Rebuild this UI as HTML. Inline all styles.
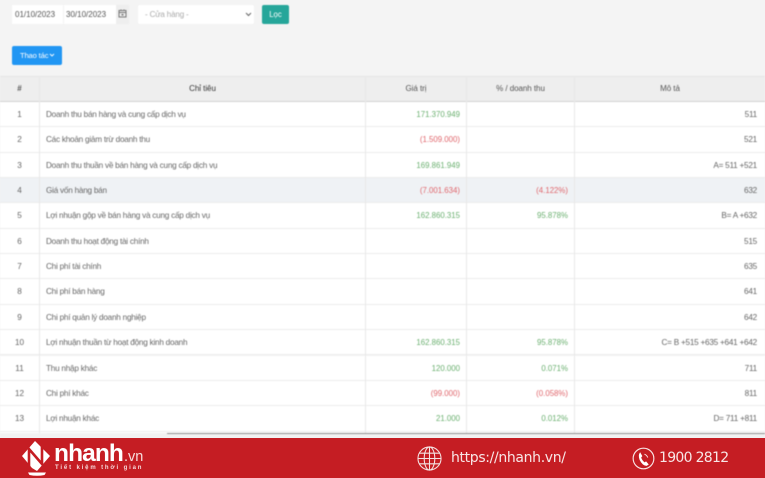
<!DOCTYPE html>
<html lang="vi"><head><meta charset="utf-8"><title>Báo cáo</title>
<style>
html,body{margin:0;padding:0}
body{width:765px;height:478px;overflow:hidden;position:relative;background:#f4f4f4;font-family:"Liberation Sans",sans-serif;font-size:8.2px;letter-spacing:-.24px;color:#666}
#blur{position:absolute;left:0;top:0;width:765px;height:438px;filter:blur(.4px);overflow:hidden}
.a{position:absolute;white-space:nowrap}
.box{position:absolute;background:#fff;box-sizing:border-box}
.row{position:absolute;left:0;width:765px;height:25.35px;background:#fff;border-bottom:1px solid #ececec;box-sizing:border-box}
.row.hl{background:#eff2f5}
.row span{position:absolute;top:0;line-height:25.2px;white-space:nowrap}
.n{left:0;width:39px;text-align:center;letter-spacing:0}
.t{left:46px}
.v{right:305px;font-size:7.85px;letter-spacing:0}
.p{right:197px;font-size:7.85px;letter-spacing:0}
.m{right:8px}
.g{color:#6bb070}
.r{color:#e0666c}
.vl{position:absolute;top:76px;height:358px;width:1px;background:#e8e8e8}
.h{top:77px;line-height:24px;text-align:center;color:#555;font-size:8px;letter-spacing:-.05px}
</style></head><body>
<div id="blur">
<div class="box" style="left:12px;top:5px;width:51px;height:19px"></div>
<div class="box" style="left:64px;top:5px;width:52px;height:19px"></div>
<div class="box" style="left:116px;top:5px;width:13px;height:19px;background:#eee"></div>
<div class="a" style="left:15px;top:5px;line-height:19px;font-size:8px;letter-spacing:0;color:#555">01/10/2023</div>
<div class="a" style="left:66px;top:5px;line-height:19px;font-size:8px;letter-spacing:0;color:#555">30/10/2023</div>
<svg class="a" style="left:118px;top:9px" width="9" height="9" viewBox="0 0 9 9" fill="none" stroke="#777" stroke-width="1"><rect x="1" y="1.5" width="7" height="6.5"/><path d="M1 3.5H8M3 .5V2M6 .5V2"/><rect x="3.5" y="5" width="2" height="1.5" fill="#777" stroke="none"/></svg>
<div class="box" style="left:138px;top:5px;width:116px;height:19px;border-radius:2px"></div>
<div class="a" style="left:145px;top:5px;line-height:19px;font-size:8px;letter-spacing:-.15px;color:#aaa">- Cửa hàng -</div>
<svg class="a" style="left:245px;top:12px" width="7" height="5" viewBox="0 0 7 5" fill="none" stroke="#666" stroke-width="1"><path d="M1 1L3.5 3.5L6 1"/></svg>
<div class="a" style="left:262px;top:5px;width:27px;height:19px;background:#26a69a;border-radius:2px;color:#fff;text-align:center;line-height:19px;font-size:7.8px;letter-spacing:0">Lọc</div>
<div class="a" style="left:12px;top:46px;width:50px;height:19px;background:#2196f3;border-radius:2px;color:#fff;line-height:19px;font-size:7.6px;letter-spacing:-.15px;text-indent:8px">Thao tác</div>
<svg class="a" style="left:49px;top:53px" width="6" height="5" viewBox="0 0 6 5" fill="none" stroke="#fff" stroke-width=".9"><path d="M1 1L3 3L5 1"/></svg>

<div class="a" style="left:0;top:76px;width:765px;height:26px;background:#eeeeee;border-top:1px solid #e6e6e6;border-bottom:1.5px solid #d4d4d4;box-sizing:border-box"></div>
<div class="a h" style="left:0;width:39px;font-weight:bold">#</div>
<div class="a h" style="left:40px;width:325px;color:#333">Chỉ tiêu</div>
<div class="a h" style="left:366px;width:100px">Giá trị</div>
<div class="a h" style="left:467px;width:107px">% / doanh thu</div>
<div class="a h" style="left:575px;width:190px">Mô tả</div>

<div class="row" style="top:102px"><span class="n">1</span><span class="t">Doanh thu bán hàng và cung cấp dịch vụ</span><span class="v g">171.370.949</span><span class="m">511</span></div>
<div class="row" style="top:127.35px"><span class="n">2</span><span class="t">Các khoản giảm trừ doanh thu</span><span class="v r">(1.509.000)</span><span class="m">521</span></div>
<div class="row" style="top:152.7px"><span class="n">3</span><span class="t">Doanh thu thuần về bán hàng và cung cấp dịch vụ</span><span class="v g">169.861.949</span><span class="m">A= 511 +521</span></div>
<div class="row hl" style="top:178.05px"><span class="n">4</span><span class="t">Giá vốn hàng bán</span><span class="v r">(7.001.634)</span><span class="p r">(4.122%)</span><span class="m">632</span></div>
<div class="row" style="top:203.4px"><span class="n">5</span><span class="t">Lợi nhuận gộp về bán hàng và cung cấp dịch vụ</span><span class="v g">162.860.315</span><span class="p g">95.878%</span><span class="m">B= A +632</span></div>
<div class="row" style="top:228.75px"><span class="n">6</span><span class="t">Doanh thu hoạt động tài chính</span><span class="m">515</span></div>
<div class="row" style="top:254.1px"><span class="n">7</span><span class="t">Chi phí tài chính</span><span class="m">635</span></div>
<div class="row" style="top:279.45px"><span class="n">8</span><span class="t">Chi phí bán hàng</span><span class="m">641</span></div>
<div class="row" style="top:304.8px"><span class="n">9</span><span class="t">Chi phí quản lý doanh nghiệp</span><span class="m">642</span></div>
<div class="row" style="top:330.15px"><span class="n">10</span><span class="t">Lợi nhuận thuần từ hoạt động kinh doanh</span><span class="v g">162.860.315</span><span class="p g">95.878%</span><span class="m">C= B +515 +635 +641 +642</span></div>
<div class="row" style="top:355.5px"><span class="n">11</span><span class="t">Thu nhập khác</span><span class="v g">120.000</span><span class="p g">0.071%</span><span class="m">711</span></div>
<div class="row" style="top:380.85px"><span class="n">12</span><span class="t">Chi phí khác</span><span class="v r">(99.000)</span><span class="p r">(0.058%)</span><span class="m">811</span></div>
<div class="row" style="top:406.2px"><span class="n">13</span><span class="t">Lợi nhuận khác</span><span class="v g">21.000</span><span class="p g">0.012%</span><span class="m">D= 711 +811</span></div>
<div class="row" style="top:431.5px;height:3px;border:0"></div>

<div class="vl" style="left:39px"></div><div class="vl" style="left:365px"></div><div class="vl" style="left:466px"></div><div class="vl" style="left:574px"></div>
<div class="a" style="left:0;top:433px;width:765px;height:5px;background:#f1f1f1"></div>
<div class="a" style="left:167px;top:433px;width:598px;height:1px;background:#8f8f8f"></div>
</div>

<div class="a" style="left:0;top:438px;width:765px;height:40px;background:#c51d23"></div>
<svg class="a" style="left:20px;top:438px;filter:blur(.3px)" width="32" height="40" viewBox="0 0 32 40">
<path d="M2 18L15 3L30 18L17 33L12 30Z" fill="#fff"/>
<path d="M9 28V11L22 26V8" fill="none" stroke="#c51d23" stroke-width="2.6"/>
<path d="M8 34.5H26L24.5 37Q17 38.5 9.5 37Z" fill="#fff"/>
</svg>
<div class="a" style="left:54px;top:440px;line-height:28px;font-size:24.5px;font-weight:bold;color:#fff;letter-spacing:-.9px;filter:blur(.2px)">nhanh</div>
<div class="a" style="left:124px;top:443px;line-height:28px;font-size:14.5px;color:#f6dcdc;letter-spacing:0;filter:blur(.2px)">.vn</div>
<div class="a" style="left:55px;top:464px;line-height:9px;font-size:6px;font-weight:bold;letter-spacing:1.85px;color:#f6d9da">Tiết kiệm thời gian</div>

<svg class="a" style="left:417px;top:446px" width="25" height="25" viewBox="0 0 26 26" fill="none" stroke="#f4e2e2" stroke-width="1.1"><circle cx="13" cy="13" r="12"/><ellipse cx="13" cy="13" rx="5.5" ry="12"/><path d="M13 1V25M2.5 7.5H23.5M1 13H25M2.5 18.5H23.5"/></svg>
<div class="a" style="left:451px;top:447px;line-height:22px;font-size:14px;color:#f8e6e6;font-family:'DejaVu Sans',sans-serif;letter-spacing:-.35px">https://nhanh.vn/</div>
<svg class="a" style="left:632px;top:447px" width="23" height="23" viewBox="0 0 24 24" fill="none" stroke="#f8e6e6"><circle cx="12" cy="12" r="10.8" stroke-width="1.2"/><path d="M8.5 5.5L10.8 9.5L9.6 11Q10.2 13.5 13 16L14.7 15L17.5 18.3L15.3 19.7Q11 19.5 8 13.5Q6 8.5 8.5 5.5Z" fill="#fff" stroke="none"/><path d="M13 7.5Q15.5 8.5 16.5 11" stroke-width=".9"/></svg>
<div class="a" style="left:659px;top:447px;line-height:22px;font-size:14px;color:#f8e6e6;font-family:'DejaVu Sans',sans-serif;letter-spacing:-.7px">1900 2812</div>
</body></html>
